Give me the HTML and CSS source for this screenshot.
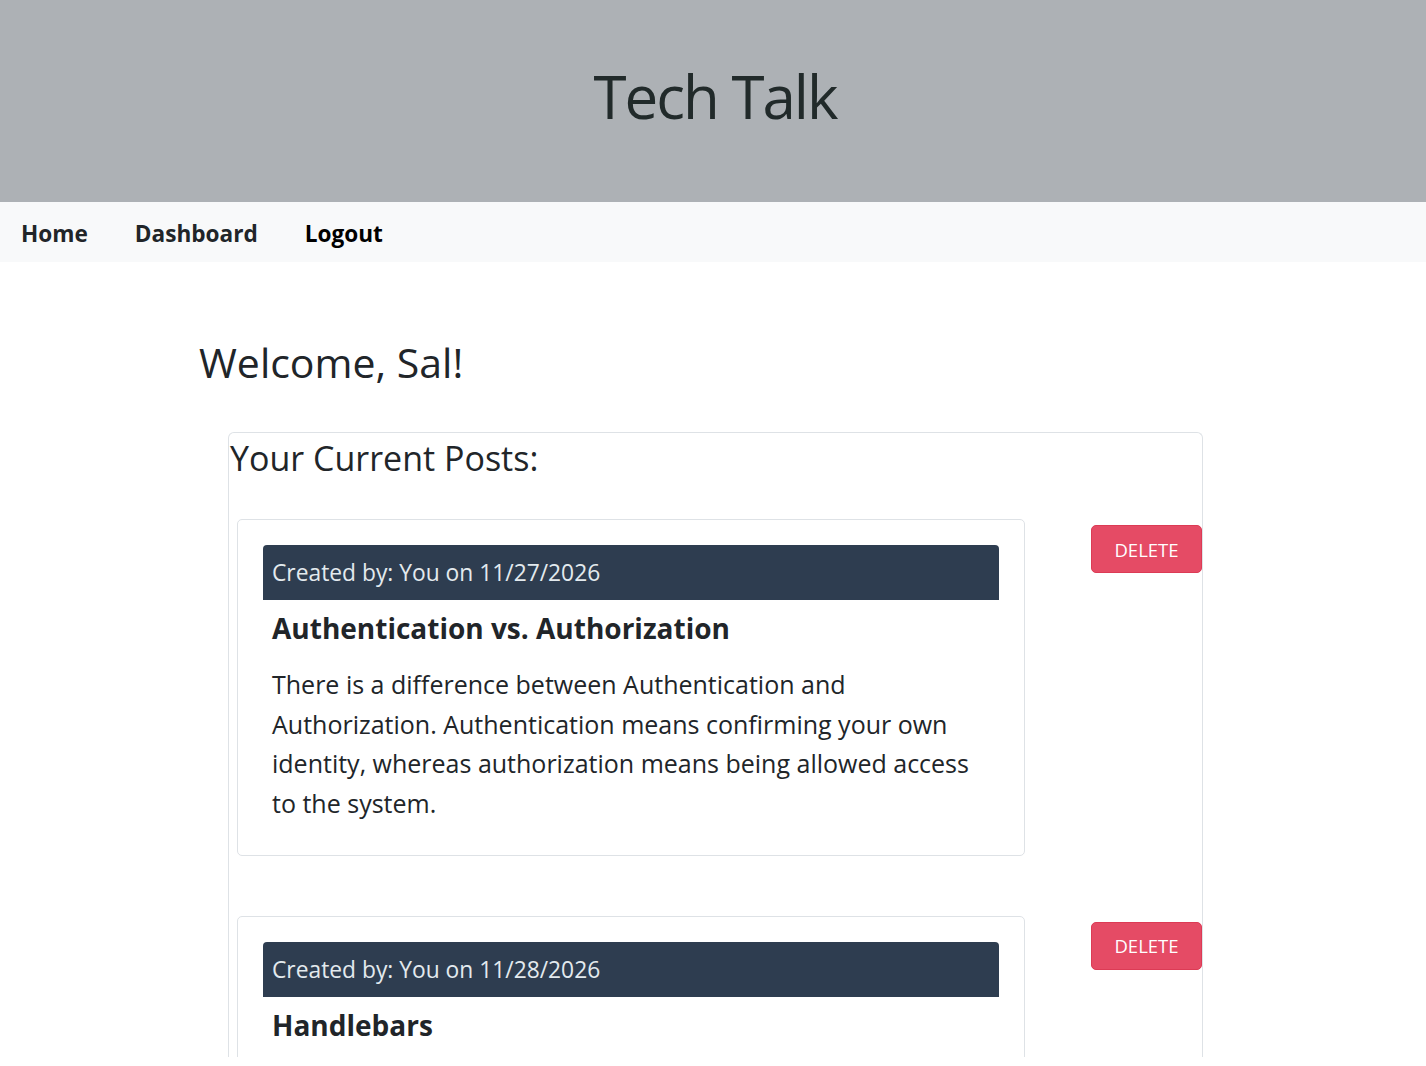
FILE: index.html
```html
<!DOCTYPE html>
<html lang="en">
<head>
<meta charset="utf-8">
<title>Tech Talk</title>
<link rel="stylesheet" href="styles.css">
</head>
<body>
<header class="site-header">
  <h1 class="site-title">Tech Talk</h1>
</header>
<nav class="site-nav">
  <a class="nav-link" href="#">Home</a>
  <a class="nav-link" href="#">Dashboard</a>
  <a class="nav-link nav-link-logout" href="#">Logout</a>
</nav>
<main class="main">
  <h2 class="welcome">Welcome, Sal!</h2>
  <section class="posts">
    <h3 class="posts-title">Your Current Posts:</h3>
    <div class="post-row">
      <article class="post-card">
        <div class="post-head">Created by: You on 11/27/2026</div>
        <h4 class="post-title">Authentication vs. Authorization</h4>
        <p class="post-body">There is a difference between Authentication and Authorization. Authentication means confirming your own identity, whereas authorization means being allowed access to the system.</p>
      </article>
      <button class="btn-delete">DELETE</button>
    </div>
    <div class="post-row">
      <article class="post-card">
        <div class="post-head">Created by: You on 11/28/2026</div>
        <h4 class="post-title">Handlebars</h4>
      </article>
      <button class="btn-delete">DELETE</button>
    </div>
  </section>
</main>
</body>
</html>
```
FILE: styles.css
```css
* { box-sizing: border-box; }
html, body { margin: 0; padding: 0; }
body {
  font-family: "Open Sans", "Noto Sans", sans-serif;
  color: #212529;
  background: #ffffff;
}
.site-header {
  background: #adb1b5;
  height: 202px;
  display: flex;
  align-items: center;
  justify-content: center;
  padding-bottom: 10px;
}
.site-title {
  margin: 0;
  font-weight: 400;
  font-size: 60px;
  color: #212a2a;
  letter-spacing: -2px;
  transform: translateX(2px);
}
.site-nav {
  background: #f8f9fa;
  height: 60px;
  display: flex;
  align-items: center;
  padding-left: 21px;
  gap: 47px;
}
.nav-link {
  color: #212529;
  font-weight: 700;
  font-size: 22.6px;
  text-decoration: none;
  padding-top: 2px;
}
.nav-link-logout { color: #000; }
.main {
  padding: 72px 223px 0 199px;
  height: 795px;
  overflow: hidden;
}
.welcome {
  margin: 0;
  font-weight: 400;
  font-size: 41px;
  line-height: 56px;
}
.posts {
  margin: 42px 0 0 29px;
  border: 1px solid #dee2e6;
  border-bottom: none;
  border-radius: 6px 6px 0 0;
  padding: 0 0 0 8px;
  min-height: 800px;
}
.posts-title {
  margin: 0;
  margin-left: -7px;
  font-weight: 400;
  font-size: 34px;
  line-height: 48px;
  padding-top: 1px;
}
.post-row {
  display: flex;
  justify-content: space-between;
  align-items: flex-start;
  margin-top: 37px;
}
.post-row + .post-row { margin-top: 60px; }
.post-card {
  width: 788px;
  border: 1px solid #dee2e6;
  border-radius: 5px;
  padding: 25px 25px 31px;
}
.post-head {
  background: #2e3d50;
  color: #e3eaee;
  border-radius: 4px 4px 0 0;
  height: 55px;
  padding: 12px 9px 0;
  font-size: 22.8px;
  line-height: 32px;
}
.post-title {
  margin: 10px 9px 19px;
  font-size: 28px;
  font-weight: 700;
  line-height: 36px;
}
.post-body {
  margin: 0 9px;
  font-size: 25px;
  line-height: 39.7px;
}
.btn-delete {
  margin-top: 6px;
  width: 111px;
  height: 48px;
  background: #e54b65;
  border: 1px solid #dc3b55;
  border-radius: 5px;
  color: #fff;
  font-family: inherit;
  font-size: 18.5px;
  padding: 0;
}
```
